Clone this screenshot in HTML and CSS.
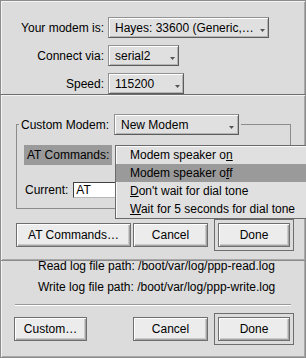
FILE: index.html
```html
<!DOCTYPE html>
<html lang="en">
<head>
  <meta charset="UTF-8">
  <title>Modem Settings</title>
  <link rel="stylesheet" href="styles.css">
</head>
<body>

<div class="window main-window">
  <div class="settings">
    <div class="setting-row">
      <span class="setting-label">Your modem is:</span>
      <div class="menu-field modem-field">
        <span class="menu-value">Hayes: 33600 (Generic,…</span>
        <svg class="menu-arrow" width="5" height="3" viewBox="0 0 5 3"><polygon points="0,0 5,0 2.5,3"/></svg>
      </div>
    </div>
    <div class="setting-row">
      <span class="setting-label">Connect via:</span>
      <div class="menu-field port-field">
        <span class="menu-value">serial2</span>
        <svg class="menu-arrow" width="5" height="3" viewBox="0 0 5 3"><polygon points="0,0 5,0 2.5,3"/></svg>
      </div>
    </div>
    <div class="setting-row">
      <span class="setting-label">Speed:</span>
      <div class="menu-field speed-field">
        <span class="menu-value">115200</span>
        <svg class="menu-arrow" width="5" height="3" viewBox="0 0 5 3"><polygon points="0,0 5,0 2.5,3"/></svg>
      </div>
    </div>
  </div>

  <div class="log-paths">
    <p>Read log file path: /boot/var/log/ppp-read.log</p>
    <p>Write log file path: /boot/var/log/ppp-write.log</p>
  </div>

  <hr class="separator">

  <div class="button-row main-buttons">
    <button class="btn custom-btn">Custom…</button>
    <button class="btn cancel-btn">Cancel</button>
    <span class="default-frame"><button class="btn done-btn">Done</button></span>
  </div>
</div>

<!-- Custom modem window, on top of the main one -->
<div class="window custom-window">
  <fieldset class="group">
    <legend>
      <span class="legend-inner">
        <span>Custom Modem:</span>
        <span class="menu-field new-modem-field">
          <span class="menu-value">New Modem</span>
          <svg class="menu-arrow" width="5" height="3" viewBox="0 0 5 3"><polygon points="0,0 5,0 2.5,3"/></svg>
        </span>
      </span>
    </legend>
    <div class="at-label">AT Commands:</div>
    <div class="current-row">
      <span>Current:</span>
      <div class="text-field">AT</div>
    </div>
  </fieldset>

  <div class="button-row custom-buttons">
    <button class="btn at-btn">AT Commands…</button>
    <button class="btn cancel-btn">Cancel</button>
    <span class="default-frame"><button class="btn done-btn">Done</button></span>
  </div>
</div>

<!-- Open AT Commands menu -->
<ul class="popup-menu">
  <li class="popup-item"><span class="item-text">Modem speaker o<u>n</u></span></li>
  <li class="popup-item selected"><span class="item-text">Modem speaker o<u>f</u>f</span></li>
  <li class="popup-item"><span class="item-text"><u>D</u>on't wait for dial tone</span></li>
  <li class="popup-item"><span class="item-text"><u>W</u>ait for 5 seconds for dial tone</span></li>
</ul>

</body>
</html>
```

FILE: styles.css
```css
/* Basic reset */
html, body {
  margin: 0;
  padding: 0;
  overflow: hidden;
}

*, *::before, *::after {
  box-sizing: border-box;
}

body {
  position: relative;
  width: 306px;
  height: 358px;
  font-family: 'Liberation Sans', Arial, sans-serif;
  font-size: 12px;
  color: #000;
  background: #dcdcdc;
}

/* Window frames */
.window {
  width: 306px;
  background: #dcdcdc;
  border: 1px solid #8c8c8c;
  box-shadow: inset 1px 1px 0 #f4f4f4, inset -1px -1px 0 #a8a8a8;
}

.main-window {
  height: 358px;
  padding-top: 16px;
}

.custom-window {
  position: absolute;
  top: 94px;
  left: 0;
  height: 167px;
  padding: 19px 0 0 15px;
  border-top-color: #6e6e6e;
}

/* Settings rows */
.settings {
  display: flex;
  flex-direction: column;
  gap: 7px;
}

.setting-row {
  display: flex;
  align-items: center;
  gap: 4px;
}

.setting-label {
  width: 103px;
  text-align: right;
}

/* Menu fields */
.menu-field {
  display: flex;
  align-items: center;
  height: 21px;
  padding: 0 3px 0 6px;
  background: #e0e0e0;
  border: 1px solid #929292;
  border-right-color: #5c5c5c;
  border-bottom-color: #5c5c5c;
  box-shadow: inset 1px 1px 0 #fff, inset -1px -1px 0 #b4b4b4;
  white-space: nowrap;
}

.menu-value {
  flex: 1;
}

.menu-arrow {
  margin-top: 5px;
  fill: #555;
}

.modem-field { width: 161px; }
.port-field { width: 71px; }
.speed-field { width: 76px; }
.new-modem-field { width: 125px; padding-right: 4px; }

/* Log paths */
.log-paths {
  margin-top: 162px;
  padding-left: 37px;
}

.log-paths p {
  margin: 0;
  line-height: 21px;
  white-space: nowrap;
}

.separator {
  width: 276px;
  height: 2px;
  margin: 6px 0 0 14px;
  border: none;
  border-top: 1px solid #9a9a9a;
  border-bottom: 1px solid #fff;
}

/* Buttons */
.button-row {
  display: flex;
  align-items: center;
}

.main-buttons {
  margin-top: 7px;
  padding: 0 11px 0 13px;
}

.custom-buttons {
  margin-top: 10px;
}

.btn {
  height: 24px;
  padding: 0;
  font: inherit;
  color: #000;
  background: #ececec;
  border: 1px solid #6e6e6e;
  box-shadow: inset 1px 1px 0 #fff, inset -1px -1px 0 #a4a4a4, inset -2px -2px 0 #cacaca;
}

.custom-btn { width: 73px; }
.at-btn { width: 115px; margin-right: 2px; }
.cancel-btn { width: 75px; margin-right: 6px; }
.main-buttons .cancel-btn { margin-left: auto; }
.done-btn { width: 72px; }

.default-frame {
  display: flex;
  padding: 3px;
  border: 1px solid #6e6e6e;
}

/* Custom modem group box */
.group {
  width: 275px;
  margin: 0;
  padding: 0 0 10px 0;
  border: 1px solid #8c8c8c;
}

.group legend {
  margin-left: 2px;
  padding: 0 2px;
}

.legend-inner {
  display: flex;
  align-items: center;
  gap: 5px;
}

.at-label {
  width: 88px;
  height: 20px;
  margin: 10px 0 0 7px;
  padding-left: 3px;
  line-height: 20px;
  background: #9a9a9a;
}

.current-row {
  display: flex;
  align-items: center;
  gap: 5px;
  margin: 17px 0 0 8px;
}

.text-field {
  width: 205px;
  height: 16px;
  padding-left: 2px;
  line-height: 14px;
  background: #fff;
  border: 1px solid #b8b8b8;
  border-top-color: #404040;
  border-left-color: #404040;
}

/* Popup menu */
.popup-menu {
  position: absolute;
  left: 115px;
  top: 145px;
  width: 200px;
  margin: 0;
  padding: 0;
  list-style: none;
  background: #e0e0e0;
  border: 1px solid #6a6a6a;
  box-shadow: inset 1px 1px 0 #fafafa;
}

.popup-item {
  display: flex;
  height: 18px;
  line-height: 18px;
  white-space: nowrap;
}

.item-text {
  margin-left: 14px;
}

.popup-item.selected {
  background: #9a9a9a;
}
```
